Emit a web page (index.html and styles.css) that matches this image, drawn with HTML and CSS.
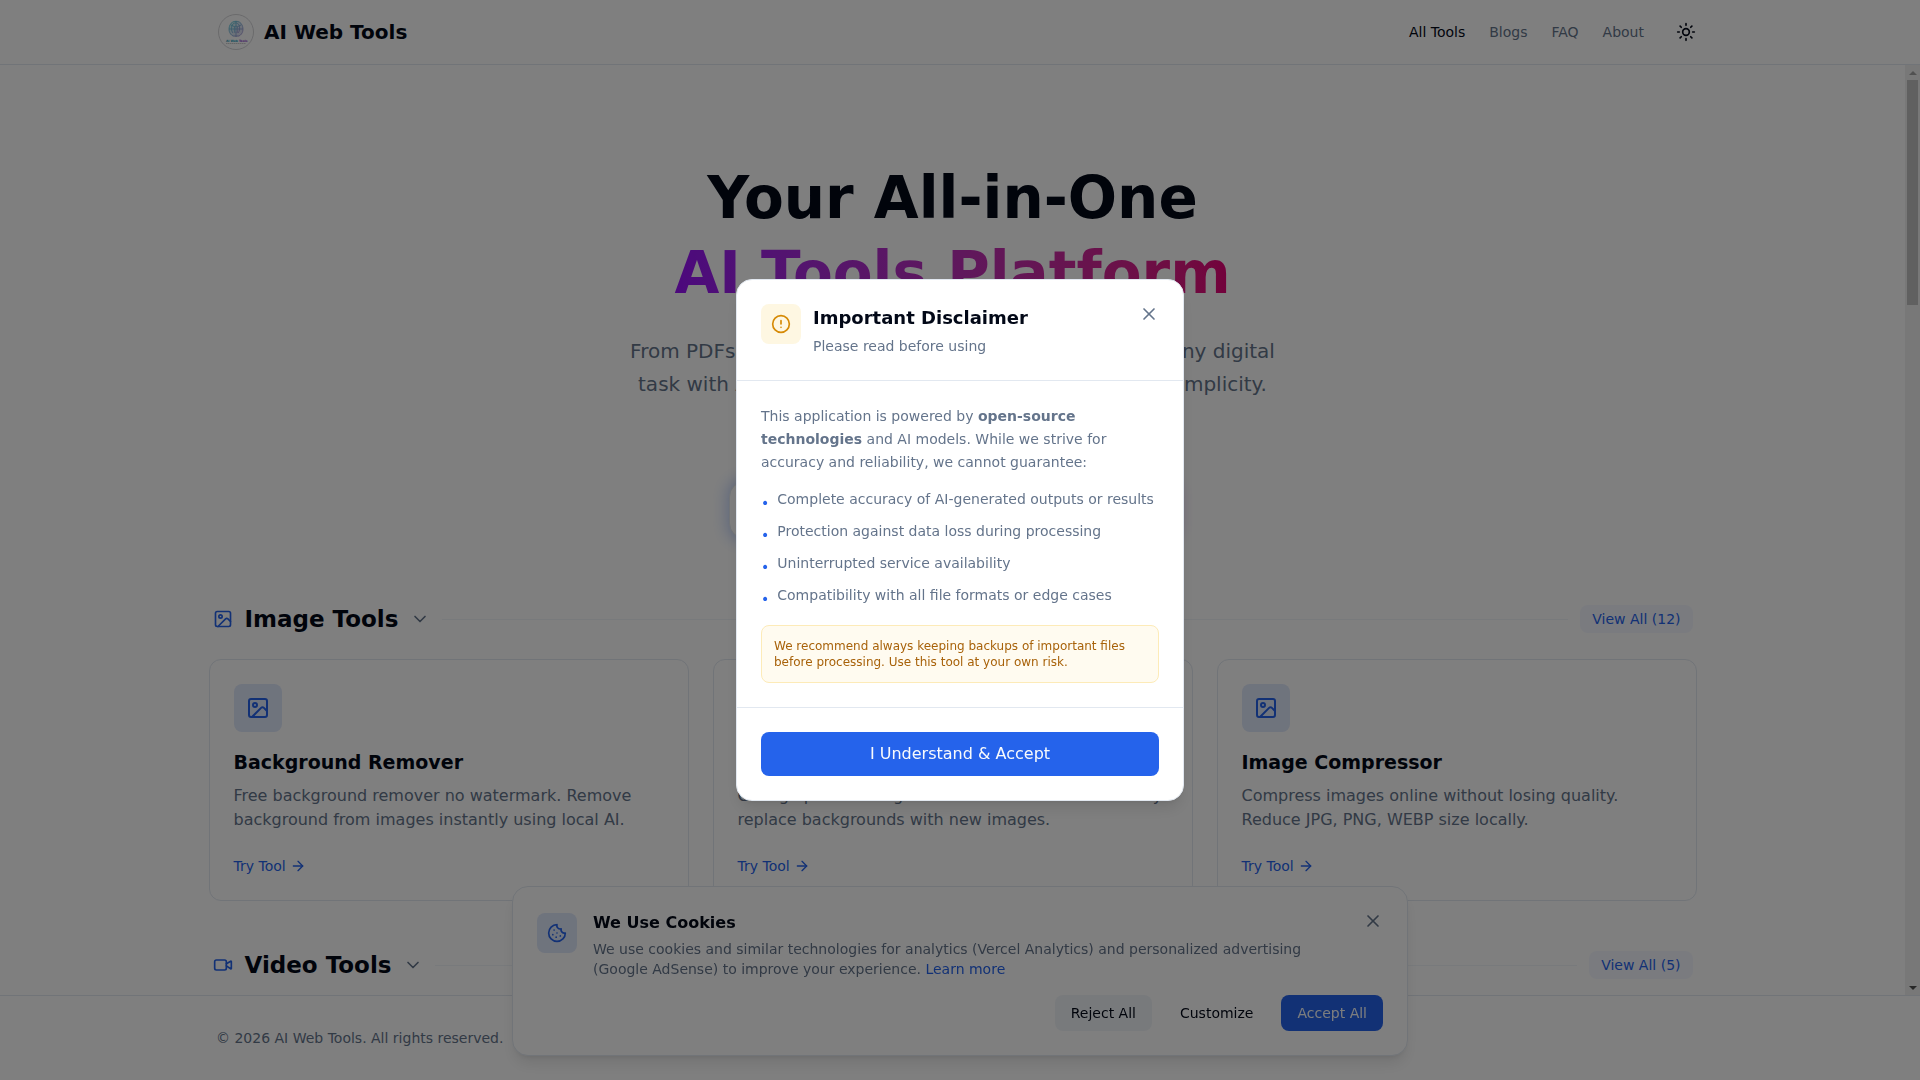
FILE: index.html
```html
<!DOCTYPE html>
<html lang="en">
<head>
    <meta charset="UTF-8">
    <meta name="viewport" content="width=device-width, initial-scale=1.0">
    <title>AI Web Tools</title>
    <link rel="stylesheet" href="styles.css">
</head>
<body>
    <!-- Shared icons -->
    <svg class="sprite" aria-hidden="true">
        <symbol id="icon-image" viewBox="0 0 24 24">
            <rect x="3" y="3" width="18" height="18" rx="2"/>
            <circle cx="9" cy="9" r="2"/>
            <path d="m21 15-3.086-3.086a2 2 0 0 0-2.828 0L6 21"/>
        </symbol>
        <symbol id="icon-video" viewBox="0 0 24 24">
            <path d="m16 13 5.223 3.482a.5.5 0 0 0 .777-.416V7.87a.5.5 0 0 0-.752-.432L16 10.5"/>
            <rect x="2" y="6" width="14" height="12" rx="2"/>
        </symbol>
        <symbol id="icon-chevron" viewBox="0 0 24 24">
            <path d="m6 9 6 6 6-6"/>
        </symbol>
        <symbol id="icon-arrow" viewBox="0 0 24 24">
            <path d="M5 12h14"/>
            <path d="m12 5 7 7-7 7"/>
        </symbol>
        <symbol id="icon-close" viewBox="0 0 24 24">
            <path d="M18 6 6 18"/>
            <path d="m6 6 12 12"/>
        </symbol>
    </svg>

    <header class="site-header">
        <div class="container header-inner">
            <a class="brand" href="#">
                <svg class="logo" viewBox="0 0 40 40" aria-hidden="true">
                    <defs>
                        <linearGradient id="logo-gradient" x1="0" y1="0" x2="1" y2="1">
                            <stop offset="0" stop-color="#4cc9d8"/>
                            <stop offset="1" stop-color="#a48ad0"/>
                        </linearGradient>
                    </defs>
                    <circle cx="20" cy="20" r="17.5" fill="#fff" stroke="#d4d4d8"/>
                    <ellipse cx="20" cy="17" rx="7" ry="8" fill="url(#logo-gradient)" opacity=".3"/>
                    <g fill="none" stroke="url(#logo-gradient)" stroke-width=".8">
                        <path d="M17 24c-4-2-5-7-3-11 2-5 10-5 12 0 2 4 1 9-3 11z"/>
                        <path d="M17 21c-2-2-2-7 0-9 2-2 5-1 6 1s1 6-1 8"/>
                        <path d="M19 21c-1-3-1-7 1-7s2 4 1 7"/>
                        <path d="M20 9v16M13 17h14M15 13l4 2M25 13l-4 2"/>
                    </g>
                    <text x="10" y="30" class="logo-text" fill="#1597b8">AI Web <tspan fill="#8b34c9">Tools</tspan></text>
                    <path d="M10 31.5h20" stroke="#aaa" stroke-width=".6" stroke-dasharray="1.5 .5"/>
                </svg>
                <span>AI Web Tools</span>
            </a>
            <nav class="nav">
                <a class="active" href="#">All Tools</a>
                <a href="#">Blogs</a>
                <a href="#">FAQ</a>
                <a href="#">About</a>
                <button class="theme-button" type="button" aria-label="Toggle theme">
                    <svg class="icon icon-md" viewBox="0 0 24 24" aria-hidden="true">
                        <circle cx="12" cy="12" r="4"/>
                        <path d="M12 2v2M12 20v2M4.93 4.93l1.41 1.41M17.66 17.66l1.41 1.41M2 12h2M20 12h2M6.34 17.66l-1.41 1.41M19.07 4.93l-1.41 1.41"/>
                    </svg>
                </button>
            </nav>
        </div>
    </header>

    <div class="viewport">
        <main class="content">
            <section class="hero">
                <h1>Your All-in-One<br><span class="gradient-text">AI Tools Platform</span></h1>
                <p>From PDFs to images and video to text, easily handle any digital task with AI-powered speed, precision and effortless simplicity.</p>
                <div class="search">
                    <input type="search" aria-label="Search tools">
                </div>
            </section>

            <section class="tools">
                <div class="tools-header">
                    <svg class="icon icon-md blue" aria-hidden="true"><use href="#icon-image"/></svg>
                    <h2>Image Tools</h2>
                    <svg class="icon icon-md muted" aria-hidden="true"><use href="#icon-chevron"/></svg>
                    <span class="line"></span>
                    <a class="view-all" href="#">View All (12)</a>
                </div>
                <div class="cards">
                    <article class="card">
                        <div class="card-icon"><svg class="icon icon-lg" aria-hidden="true"><use href="#icon-image"/></svg></div>
                        <h3>Background Remover</h3>
                        <p>Free background remover no watermark. Remove background from images instantly using local AI.</p>
                        <a class="try" href="#">Try Tool <svg class="icon icon-sm" aria-hidden="true"><use href="#icon-arrow"/></svg></a>
                    </article>
                    <article class="card">
                        <div class="card-icon"><svg class="icon icon-lg" aria-hidden="true"><use href="#icon-image"/></svg></div>
                        <h3>Background Changer</h3>
                        <p>Change photo background online with AI. Effortlessly replace backgrounds with new images.</p>
                        <a class="try" href="#">Try Tool <svg class="icon icon-sm" aria-hidden="true"><use href="#icon-arrow"/></svg></a>
                    </article>
                    <article class="card">
                        <div class="card-icon"><svg class="icon icon-lg" aria-hidden="true"><use href="#icon-image"/></svg></div>
                        <h3>Image Compressor</h3>
                        <p>Compress images online without losing quality. Reduce JPG, PNG, WEBP size locally.</p>
                        <a class="try" href="#">Try Tool <svg class="icon icon-sm" aria-hidden="true"><use href="#icon-arrow"/></svg></a>
                    </article>
                </div>
            </section>

            <section class="tools">
                <div class="tools-header">
                    <svg class="icon icon-md blue" aria-hidden="true"><use href="#icon-video"/></svg>
                    <h2>Video Tools</h2>
                    <svg class="icon icon-md muted" aria-hidden="true"><use href="#icon-chevron"/></svg>
                    <span class="line"></span>
                    <a class="view-all" href="#">View All (5)</a>
                </div>
            </section>
        </main>
        <div class="scrollbar" aria-hidden="true">
            <span class="arrow arrow-up"></span>
            <div class="track"><div class="thumb"></div></div>
            <span class="arrow arrow-down"></span>
        </div>
    </div>

    <footer class="site-footer">
        <div class="container">
            <p>© 2026 AI Web Tools. All rights reserved.</p>
        </div>
    </footer>

    <!-- Cookie banner -->
    <aside class="cookies" aria-label="Cookie settings">
        <div class="cookie-icon">
            <svg class="icon icon-md" viewBox="0 0 24 24" aria-hidden="true">
                <path d="M12 2a10 10 0 1 0 10 10 4 4 0 0 1-5-5 4 4 0 0 1-5-5"/>
                <path d="M8.5 8.5v.01M16 15.5v.01M12 12v.01M11 17v.01M7 14v.01"/>
            </svg>
        </div>
        <div class="cookie-body">
            <div class="cookie-top">
                <div>
                    <h2>We Use Cookies</h2>
                    <p>We use cookies and similar technologies for analytics (Vercel Analytics) and personalized advertising (Google AdSense) to improve your experience. <a href="#">Learn more</a></p>
                </div>
                <button class="close" type="button" aria-label="Close cookie banner">
                    <svg class="icon icon-md" aria-hidden="true"><use href="#icon-close"/></svg>
                </button>
            </div>
            <div class="cookie-actions">
                <button class="btn btn-light" type="button">Reject All</button>
                <button class="btn" type="button">Customize</button>
                <button class="btn btn-primary" type="button">Accept All</button>
            </div>
        </div>
    </aside>

    <!-- Disclaimer modal -->
    <div class="overlay" id="disclaimer">
        <div class="modal" role="dialog" aria-modal="true" aria-labelledby="modal-title">
            <div class="modal-header">
                <div class="modal-icon">
                    <svg class="icon icon-md" viewBox="0 0 24 24" aria-hidden="true">
                        <circle cx="12" cy="12" r="10"/>
                        <path d="M12 8v4M12 16h.01"/>
                    </svg>
                </div>
                <div class="modal-heading">
                    <h2 id="modal-title">Important Disclaimer</h2>
                    <p>Please read before using</p>
                </div>
                <button class="close" type="button" aria-label="Close disclaimer">
                    <svg class="icon icon-md" aria-hidden="true"><use href="#icon-close"/></svg>
                </button>
            </div>
            <div class="modal-body">
                <p>This application is powered by <strong>open-source technologies</strong> and AI models. While we strive for accuracy and reliability, we cannot guarantee:</p>
                <ul>
                    <li>Complete accuracy of AI-generated outputs or results</li>
                    <li>Protection against data loss during processing</li>
                    <li>Uninterrupted service availability</li>
                    <li>Compatibility with all file formats or edge cases</li>
                </ul>
                <div class="warning">We recommend always keeping backups of important files before processing. Use this tool at your own risk.</div>
            </div>
            <div class="modal-footer">
                <button class="accept" type="button">I Understand &amp; Accept</button>
            </div>
        </div>
    </div>
</body>
</html>
```

FILE: styles.css
```css
* {
    box-sizing: border-box;
}
body {
    font-family: "DejaVu Sans", sans-serif;
    font-size: 16px;
    line-height: 24px;
    color: #020817;
    background-color: #ffffff;
    margin: 0;
    height: 100vh;
    display: flex;
    flex-direction: column;
    overflow: hidden;
}
h1, h2, h3, p, ul {
    margin: 0;
    padding: 0;
}
a {
    color: inherit;
    text-decoration: none;
}
button {
    font: inherit;
    color: inherit;
    background: none;
    border: none;
    padding: 0;
    cursor: pointer;
}
.sprite {
    display: none;
}
.icon {
    fill: none;
    stroke: currentColor;
    stroke-width: 2;
    stroke-linecap: round;
    stroke-linejoin: round;
    flex-shrink: 0;
    display: block;
}
.icon-sm {
    width: 16px;
    height: 16px;
}
.icon-md {
    width: 20px;
    height: 20px;
}
.icon-lg {
    width: 24px;
    height: 24px;
}
.blue {
    color: #2563eb;
}
.muted {
    color: #64748b;
}
.container {
    max-width: 1536px;
    margin: 0 auto;
    padding: 0 24px;
}

/* Header */
.site-header {
    border-bottom: 1px solid #e2e8f0;
}
.header-inner {
    display: flex;
    align-items: center;
    justify-content: space-between;
    height: 64px;
}
.brand {
    display: flex;
    align-items: center;
    gap: 8px;
    font-size: 20px;
    font-weight: bold;
}
.logo {
    width: 40px;
    height: 40px;
}
.logo-text {
    font-size: 3px;
}
.nav {
    display: flex;
    align-items: center;
    gap: 24px;
    font-size: 14px;
    color: #64748b;
}
.nav .active {
    color: #020817;
}
.theme-button {
    width: 36px;
    height: 36px;
    display: grid;
    place-items: center;
    color: #020817;
}

/* Main content */
.viewport {
    flex: 1;
    min-height: 0;
    display: flex;
}
.content {
    flex: 1;
    overflow-y: auto;
    scrollbar-width: none;
}
.scrollbar {
    width: 15px;
    display: flex;
    flex-direction: column;
    align-items: center;
    background: #f1f1f1;
}
.arrow {
    height: 15px;
    display: flex;
    align-items: center;
}
.arrow::before {
    content: "";
    border: 4px solid transparent;
}
.arrow-up::before {
    border-top: none;
    border-bottom-color: #a3a3a3;
}
.arrow-down::before {
    border-bottom: none;
    border-top-color: #505050;
}
.track {
    flex: 1;
    width: 11px;
}
.thumb {
    height: 25%;
    background: #c1c1c1;
}
.hero {
    padding: 96px 24px 64px;
    text-align: center;
}
.hero h1 {
    font-size: 58px;
    line-height: 75px;
}
.gradient-text {
    background: linear-gradient(to right in oklab, #9810fa, #e60076);
    -webkit-background-clip: text;
    background-clip: text;
    color: transparent;
}
.hero p {
    max-width: 672px;
    margin: 24px auto 0;
    font-size: 20px;
    line-height: 33px;
    color: #64748b;
}
.search {
    position: relative;
    max-width: 448px;
    margin: 80px auto 0;
}
.search::before {
    content: "";
    position: absolute;
    inset: -2px;
    border-radius: 16px;
    background: linear-gradient(to right, #2563eb, #9333ea);
    filter: blur(8px);
    opacity: 0.3;
}
.search input {
    position: relative;
    display: block;
    width: 100%;
    height: 58px;
    padding: 0 24px;
    border: 1px solid #e2e8f0;
    border-radius: 16px;
    background: #ffffff;
    font: inherit;
}
.tools {
    max-width: 1536px;
    margin: 0 auto 48px;
    padding: 0 24px;
}
.tools-header {
    display: flex;
    align-items: center;
    gap: 12px;
    height: 32px;
    padding: 0 4px;
}
.tools-header h2 {
    font-size: 23px;
    line-height: 32px;
}
.line {
    flex: 1;
    height: 1px;
    background: #f1f5f9;
}
.view-all {
    padding: 4px 12px;
    border-radius: 8px;
    background: #f4f7fe;
    color: #2563eb;
    font-size: 14px;
    line-height: 20px;
}
.cards {
    display: grid;
    grid-template-columns: repeat(3, 1fr);
    gap: 24px;
    margin-top: 24px;
}
.card {
    padding: 24px;
    border: 1px solid #e2e8f0;
    border-radius: 12px;
}
.card-icon {
    width: 48px;
    height: 48px;
    display: grid;
    place-items: center;
    border-radius: 8px;
    background: #dfe8fb;
    color: #2563eb;
}
.card h3 {
    margin-top: 16px;
    font-size: 19px;
    line-height: 28px;
}
.card p {
    margin: 8px 0 24px;
    color: #64748b;
}
.try {
    display: flex;
    align-items: center;
    gap: 4px;
    font-size: 14px;
    line-height: 20px;
    color: #2563eb;
}

/* Footer */
.site-footer {
    padding: 32px 0;
    border-top: 1px solid #e2e8f0;
    font-size: 14px;
    line-height: 20px;
    color: #64748b;
}

/* Cookie banner */
.cookies {
    position: fixed;
    left: 0;
    right: 0;
    bottom: 24px;
    max-width: 896px;
    margin: 0 auto;
    padding: 24px;
    display: flex;
    gap: 16px;
    background: #ffffff;
    border: 1px solid #e2e8f0;
    border-radius: 16px;
    box-shadow: 0 10px 15px -3px rgba(0, 0, 0, 0.1), 0 4px 6px -4px rgba(0, 0, 0, 0.1);
}
.cookie-icon {
    flex-shrink: 0;
    width: 40px;
    height: 40px;
    margin-top: 2px;
    display: grid;
    place-items: center;
    border-radius: 8px;
    background: #dfe8fb;
    color: #2563eb;
}
.cookie-body {
    flex: 1;
}
.cookie-top {
    display: flex;
    align-items: flex-start;
    justify-content: space-between;
    gap: 16px;
}
.cookies h2 {
    font-size: 16px;
    line-height: 24px;
}
.cookies p {
    margin-top: 4px;
    font-size: 14px;
    line-height: 20px;
    color: #64748b;
}
.cookies p a {
    color: #2563eb;
}
.cookie-actions {
    display: flex;
    justify-content: flex-end;
    gap: 12px;
    margin-top: 16px;
}
.btn {
    padding: 8px 16px;
    border-radius: 8px;
    font-size: 14px;
    line-height: 20px;
}
.btn-light {
    background: #f1f5f9;
}
.btn-primary {
    background: #2563eb;
    color: #f8fafc;
}
.close {
    color: #64748b;
}

/* Disclaimer modal */
.overlay {
    position: fixed;
    inset: 0;
    display: flex;
    align-items: center;
    justify-content: center;
    background: rgba(0, 0, 0, 0.5);
}
.modal {
    width: 100%;
    max-width: 448px;
    background: #ffffff;
    border: 1px solid #e2e8f0;
    border-radius: 16px;
    box-shadow: 0 10px 15px -3px rgba(0, 0, 0, 0.1), 0 4px 6px -4px rgba(0, 0, 0, 0.1);
}
.modal-header {
    display: flex;
    align-items: flex-start;
    gap: 12px;
    padding: 24px;
    border-bottom: 1px solid #e2e8f0;
}
.modal-icon {
    width: 40px;
    height: 40px;
    display: grid;
    place-items: center;
    border-radius: 8px;
    background: #fef7e2;
    color: #d68a05;
}
.modal-heading {
    flex: 1;
}
.modal h2 {
    font-size: 18px;
    line-height: 28px;
}
.modal p {
    font-size: 14px;
    color: #64748b;
}
.modal-heading p {
    margin-top: 4px;
    line-height: 20px;
}
.modal-body {
    padding: 24px;
}
.modal-body p {
    line-height: 23px;
}
.modal ul {
    margin: 15px 0 16px;
    list-style: none;
    font-size: 14px;
    line-height: 20px;
    color: #64748b;
}
.modal li {
    display: flex;
    gap: 8px;
    padding-bottom: 12px;
}
.modal li:last-child {
    padding-bottom: 4px;
}
.modal li::before {
    content: "•";
    height: 20px;
    margin: 4px 0 -4px;
    color: #2563eb;
}
.warning {
    padding: 12px;
    border: 1px solid #fdebb8;
    border-radius: 8px;
    background: #fffbf0;
    color: #a8620a;
    font-size: 12px;
    line-height: 16px;
}
.modal-footer {
    padding: 24px;
    border-top: 1px solid #e2e8f0;
}
.accept {
    width: 100%;
    padding: 10px 16px;
    border-radius: 8px;
    background: #2563eb;
    color: #f8fafc;
}
```
